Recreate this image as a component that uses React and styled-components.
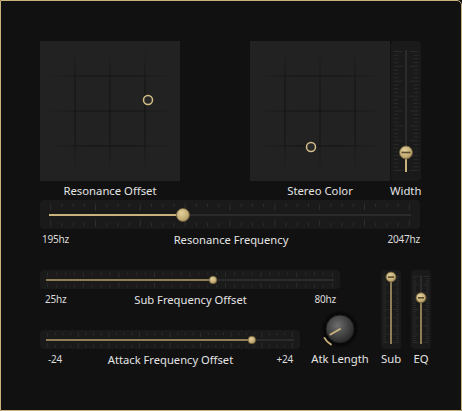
import { useId } from "react";
import styled, { createGlobalStyle } from "styled-components";

const GOLD = "#c9b27c";
const GOLD_DIM = "#8e7d57";
const TRACK = "#2b2b2b";
const TICK = "#2e2e2e";

const GlobalStyle = createGlobalStyle`
  html, body {
    margin: 0;
    padding: 0;
    background: #111111;
  }
  body {
    font-family: "Noto Sans", "Open Sans", sans-serif;
  }
`;

const Panel = styled.div`
  box-sizing: border-box;
  width: 462px;
  height: 411px;
  background: #111111;
  border: 1px solid ${GOLD};
  border-top-right-radius: 5px;
  padding: 40px 0 0 39px;
  display: flex;
  flex-direction: column;
`;

const TopRow = styled.div`
  display: flex;
  align-items: flex-start;
`;

const Group = styled.div`
  display: flex;
  flex-direction: column;
  align-items: center;
  margin-right: ${(p) => p.$mr || 0}px;
`;

const Pad = styled.div`
  width: 140px;
  height: 140px;
  background: #222222;
  svg {
    display: block;
  }
`;

const Label = styled.div`
  height: ${(p) => p.$h || 20}px;
  line-height: ${(p) => p.$h || 20}px;
  font-size: 11.3px;
  color: #e4e4e4;
  text-align: center;
  white-space: nowrap;
`;

const SliderBox = styled.div`
  width: ${(p) => p.$w}px;
  height: ${(p) => p.$h}px;
  background: #1a1a1a;
  border-radius: 4px;
  svg {
    display: block;
  }
`;

const Section = styled.div`
  display: flex;
  flex-direction: column;
  margin-top: ${(p) => p.$mt || 0}px;
`;

const ScaleRow = styled.div`
  width: ${(p) => p.$w}px;
  height: 20px;
  display: grid;
  grid-template-columns: 1fr auto 1fr;
  align-items: center;
  box-sizing: border-box;
  padding: 0 ${(p) => p.$pr || 0}px 0 ${(p) => p.$pl || 0}px;
`;

const Small = styled.span`
  font-size: 10px;
  color: #dcdcdc;
  letter-spacing: -0.2px;
  text-align: ${(p) => p.$align || "left"};
`;

const Mid = styled.span`
  font-size: 11.2px;
  color: #e4e4e4;
  white-space: nowrap;
`;

const Bottom = styled.div`
  display: flex;
  align-items: flex-start;
  margin-top: 21px;
`;

const LeftCol = styled.div`
  width: 341px;
  display: flex;
  flex-direction: column;
`;

const AttackRow = styled.div`
  display: flex;
  align-items: flex-end;
`;

const KnobGroup = styled.div`
  width: 80px;
  display: flex;
  flex-direction: column;
  align-items: center;
  svg {
    display: block;
  }
`;

const VCol = styled.div`
  display: flex;
  gap: 10px;
`;

function XYPad({ x, y }) {
  const id = useId();
  const lines = [35, 70, 105];
  const stops = (
    <>
      <stop offset="0" stopColor="#141414" stopOpacity="0" />
      <stop offset="0.3" stopColor="#141414" stopOpacity="0.55" />
      <stop offset="0.7" stopColor="#141414" stopOpacity="0.55" />
      <stop offset="1" stopColor="#141414" stopOpacity="0" />
    </>
  );
  return (
    <Pad>
      <svg width="140" height="140">
        <defs>
          <linearGradient id={id + "v"} x1="0" y1="0" x2="0" y2="1">
            {stops}
          </linearGradient>
          <linearGradient id={id + "h"} x1="0" y1="0" x2="1" y2="0">
            {stops}
          </linearGradient>
        </defs>
        {lines.map((p) => (
          <rect key={"v" + p} x={p - 1} y="6" width="2" height="128" fill={`url(#${id}v)`} />
        ))}
        {lines.map((p) => (
          <rect key={"h" + p} x="6" y={p - 1} width="128" height="2" fill={`url(#${id}h)`} />
        ))}
        <circle cx={x} cy={y} r="4.5" fill="#2a2a2a" stroke="#d4bf87" strokeWidth="1.5" />
      </svg>
    </Pad>
  );
}

function Thumb({ cx, cy, r, bar }) {
  const id = useId();
  return (
    <g>
      <defs>
        <radialGradient id={id} cx="0.4" cy="0.35" r="0.7">
          <stop offset="0" stopColor="#e2d09c" />
          <stop offset="0.7" stopColor="#c2aa73" />
          <stop offset="1" stopColor="#9c8553" />
        </radialGradient>
      </defs>
      <circle cx={cx} cy={cy} r={r} fill={`url(#${id})`} stroke="#6f5e3a" strokeWidth="0.8" />
      {bar && (
        <line
          x1={cx - r + 2}
          y1={cy}
          x2={cx + r - 2}
          y2={cy}
          stroke="#5b4b2c"
          strokeWidth="1.6"
        />
      )}
    </g>
  );
}

function HSlider({ w, h, inset, value, r, fill, big }) {
  const cy = Math.round(h / 2);
  const x0 = inset;
  const x1 = w - inset;
  const pos = x0 + (x1 - x0) * value;
  const t0 = x0 + 1.7;
  const step = (x1 - x0 - 3.4) / 32;
  const tall = big ? [4.5, 11.5] : [3, 7.5];
  const short = big ? [8, 11.5] : [5, 7.5];
  return (
    <SliderBox $w={w} $h={h}>
      <svg width={w} height={h}>
        {Array.from({ length: 33 }, (_, i) => {
          const x = t0 + i * step;
          const [a, b] = i % 4 === 0 ? tall : short;
          return (
            <g key={i} stroke={TICK} strokeWidth="1">
              <line x1={x} y1={cy - b} x2={x} y2={cy - a} />
              <line x1={x} y1={cy + a} x2={x} y2={cy + b} />
            </g>
          );
        })}
        <line x1={x0} y1={cy} x2={x1} y2={cy} stroke={TRACK} strokeWidth="2" />
        <line x1={x0} y1={cy} x2={pos} y2={cy} stroke={fill} strokeWidth="2" />
        <Thumb cx={pos} cy={cy} r={r} />
      </svg>
    </SliderBox>
  );
}

function VSlider({ w, h, top, bottom, value, r, fill }) {
  const cx = w / 2;
  const y0 = top;
  const y1 = h - bottom;
  const pos = y1 - (y1 - y0) * value;
  const t0 = y0 + 1.5;
  const step = (y1 - y0 - 3) / 32;
  const big = w > 24;
  const tall = big ? [3.5, 12.5] : [2.5, 8];
  const short = big ? [7.5, 12.5] : [5, 8];
  return (
    <SliderBox $w={w} $h={h}>
      <svg width={w} height={h}>
        {Array.from({ length: 33 }, (_, i) => {
          const y = t0 + i * step;
          const [a, b] = i % 4 === 0 ? tall : short;
          return (
            <g key={i} stroke="#2a2a2a" strokeWidth="1">
              <line x1={cx - b} y1={y} x2={cx - a} y2={y} />
              <line x1={cx + a} y1={y} x2={cx + b} y2={y} />
            </g>
          );
        })}
        <line x1={cx} y1={y0} x2={cx} y2={y1} stroke={TRACK} strokeWidth="2" />
        <line x1={cx} y1={pos} x2={cx} y2={y1} stroke={fill} strokeWidth="2" />
        <Thumb cx={cx} cy={pos} r={r} bar />
      </svg>
    </SliderBox>
  );
}

function Knob() {
  const id = useId();
  const c = 22;
  const cy = 20;
  const pt = (deg, rad) => {
    const a = (deg * Math.PI) / 180;
    return [c + rad * Math.sin(a), cy - rad * Math.cos(a)];
  };
  const [ax, ay] = pt(208, 18);
  const [bx, by] = pt(242, 18);
  const [px, py] = pt(240, 11);
  return (
    <svg width="44" height="40">
      <defs>
        <radialGradient id={id + "s"} cx="0.5" cy="0.5" r="0.5">
          <stop offset="0.72" stopColor="#050505" stopOpacity="1" />
          <stop offset="1" stopColor="#050505" stopOpacity="0" />
        </radialGradient>
        <radialGradient id={id + "b"} cx="0.42" cy="0.38" r="0.65">
          <stop offset="0" stopColor="#6e6e6e" />
          <stop offset="0.45" stopColor="#4c4c4c" />
          <stop offset="1" stopColor="#262626" />
        </radialGradient>
      </defs>
      <circle cx={c} cy={cy} r="19.5" fill={`url(#${id}s)`} />
      <circle cx={c} cy={cy} r="14" fill={`url(#${id}b)`} stroke="#1c1c1c" strokeWidth="1" />
      <path
        d={`M ${ax} ${ay} A 18 18 0 0 1 ${bx} ${by}`}
        fill="none"
        stroke={GOLD}
        strokeWidth="1.8"
      />
      <line x1={c} y1={cy} x2={px} y2={py} stroke={GOLD} strokeWidth="2" strokeLinecap="round" />
    </svg>
  );
}

export default function App() {
  return (
    <>
      <GlobalStyle />
      <Panel>
        <TopRow>
          <Group $mr={70}>
            <XYPad x={108} y={59} />
            <Label $h={19}>Resonance Offset</Label>
          </Group>
          <Group>
            <XYPad x={61} y={106} />
            <Label $h={19}>Stereo Color</Label>
          </Group>
          <Group>
            <VSlider w={30} h={140} top={9} bottom={9} value={0.16} r={6.5} fill={GOLD} />
            <Label $h={19}>Width</Label>
          </Group>
        </TopRow>

        <Section>
          <HSlider w={380} h={29} inset={9} value={0.37} r={6.5} fill={GOLD} big />
          <ScaleRow $w={380} $pl={2}>
            <Small>195hz</Small>
            <Mid>Resonance Frequency</Mid>
            <Small $align="right">2047hz</Small>
          </ScaleRow>
        </Section>

        <Bottom>
          <LeftCol>
            <Section>
              <HSlider w={300} h={19} inset={6} value={0.58} r={3.8} fill={GOLD_DIM} />
              <ScaleRow $w={300} $pl={5} $pr={4}>
                <Small>25hz</Small>
                <Mid>Sub Frequency Offset</Mid>
                <Small $align="right">80hz</Small>
              </ScaleRow>
            </Section>
            <AttackRow>
              <Section>
                <HSlider w={260} h={19} inset={6} value={0.83} r={3.8} fill={GOLD_DIM} />
                <ScaleRow $w={260} $pl={8} $pr={7}>
                  <Small>-24</Small>
                  <Mid>Attack Frequency Offset</Mid>
                  <Small $align="right">+24</Small>
                </ScaleRow>
              </Section>
              <KnobGroup>
                <Knob />
                <Label>Atk Length</Label>
              </KnobGroup>
            </AttackRow>
          </LeftCol>
          <VCol>
            <Group>
              <VSlider w={20} h={79} top={5} bottom={5} value={0.97} r={5} fill={GOLD_DIM} />
              <Label>Sub</Label>
            </Group>
            <Group>
              <VSlider w={20} h={79} top={5} bottom={5} value={0.67} r={5} fill={GOLD_DIM} />
              <Label>EQ</Label>
            </Group>
          </VCol>
        </Bottom>
      </Panel>
    </>
  );
}
